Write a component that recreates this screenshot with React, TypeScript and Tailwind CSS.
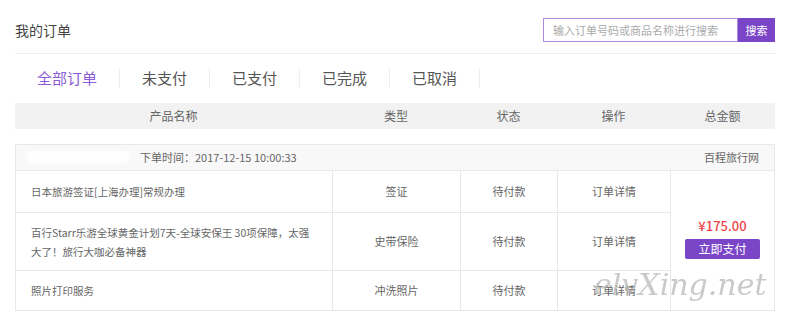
import React from 'react';

const tabs = ['全部订单', '未支付', '已支付', '已完成', '已取消'];

const rows = [
  { name: '日本旅游签证[上海办理]常规办理', type: '签证', status: '待付款', h: 'h-[41px]' },
  { name: '百行Starr乐游全球黄金计划7天-全球安保王 30项保障，太强大了！旅行大咖必备神器', type: '史带保险', status: '待付款', h: 'h-[58px]' },
  { name: '照片打印服务', type: '冲洗照片', status: '待付款', h: 'h-[40px]' },
];

export default function App() {
  return (
    <div
      className="relative w-[800px] h-[320px] overflow-hidden bg-white pl-[15px] pr-[25px] text-[#666]"
      style={{ fontFamily: '"Noto Sans CJK SC", "Noto Sans", sans-serif' }}
    >
      {/* title + search */}
      <div className="flex items-center justify-between pt-[18px] pb-[11px] border-b border-[#eeeeee]">
        <h1 className="text-[14px] text-[#444] leading-[24px]">我的订单</h1>
        <div className="flex h-[24px]">
          <input
            className="w-[195px] h-full border border-[#a98ae0] px-[9px] text-[11px] text-[#555] placeholder-[#aaaaaa] outline-none"
            placeholder="输入订单号码或商品名称进行搜索"
          />
          <button className="w-[37px] h-full bg-[#7b45c8] text-white text-[11px]">搜索</button>
        </div>
      </div>

      {/* tabs */}
      <div className="flex items-center h-[47px]">
        {tabs.map((t, i) => (
          <span
            key={t}
            className={`px-[22px] text-[15px] leading-[20px] border-r border-[#eeeeee] ${i === 0 ? 'text-[#8a5cd6]' : 'text-[#555]'}`}
          >
            {t}
          </span>
        ))}
      </div>

      {/* table head */}
      <div className="grid grid-cols-[317px_128px_97px_113px_105px] h-[26px] items-center bg-[#f2f2f2] text-[12px] text-[#666] mt-[2px]">
        <span className="text-center">产品名称</span>
        <span className="text-center">类型</span>
        <span className="text-center">状态</span>
        <span className="text-center">操作</span>
        <span className="text-center">总金额</span>
      </div>

      {/* order block */}
      <div className="mt-[15px] border border-[#e8e8e8] text-[11px]">
        <div className="relative flex items-center justify-between h-[26px] bg-[#f8f8f8] pl-[124px] pr-[15px] border-b border-[#e8e8e8]">
          <div className="absolute left-[10px] top-[6px] w-[104px] h-[12px] rounded-full bg-white blur-[2px]" />
          <span>下单时间：2017-12-15 10:00:33</span>
          <span>百程旅行网</span>
        </div>
        <div className="grid grid-cols-[317px_128px_97px_113px_1fr]">
          {rows.map((r, i) => (
            <React.Fragment key={i}>
              <div
                className={`${r.h} flex items-center pl-[15px] pr-[20px] text-[10.5px] leading-[19px] border-r border-[#e8e8e8] ${i > 0 ? 'border-t' : ''}`}
                style={{ gridRow: i + 1, gridColumn: 1 }}
              >
                {r.name}
              </div>
              <div
                className={`flex items-center justify-center border-r border-[#e8e8e8] ${i > 0 ? 'border-t' : ''}`}
                style={{ gridRow: i + 1, gridColumn: 2 }}
              >
                {r.type}
              </div>
              <div
                className={`flex items-center justify-center border-r border-[#e8e8e8] ${i > 0 ? 'border-t' : ''}`}
                style={{ gridRow: i + 1, gridColumn: 3 }}
              >
                {r.status}
              </div>
              <div
                className={`flex items-center justify-center border-r border-[#e8e8e8] ${i > 0 ? 'border-t' : ''}`}
                style={{ gridRow: i + 1, gridColumn: 4 }}
              >
                订单详情
              </div>
            </React.Fragment>
          ))}
          <div className="row-span-3 col-start-5 row-start-1 flex flex-col items-center justify-center gap-[5px] pb-[4px]">
            <span className="text-[#f0464b] text-[13px] font-medium leading-[16px]">¥175.00</span>
            <button className="w-[75px] h-[20px] rounded-[2px] bg-[#7b45c8] text-white text-[12px] leading-[20px]">
              立即支付
            </button>
          </div>
        </div>
      </div>

      {/* watermark */}
      <div
        className="absolute left-[594px] top-[270px] text-[30px] italic text-[#b4b4b4] opacity-70 pointer-events-none leading-none"
        style={{ fontFamily: '"DejaVu Serif", serif' }}
      >
        elvXing.net
      </div>
    </div>
  );
}
